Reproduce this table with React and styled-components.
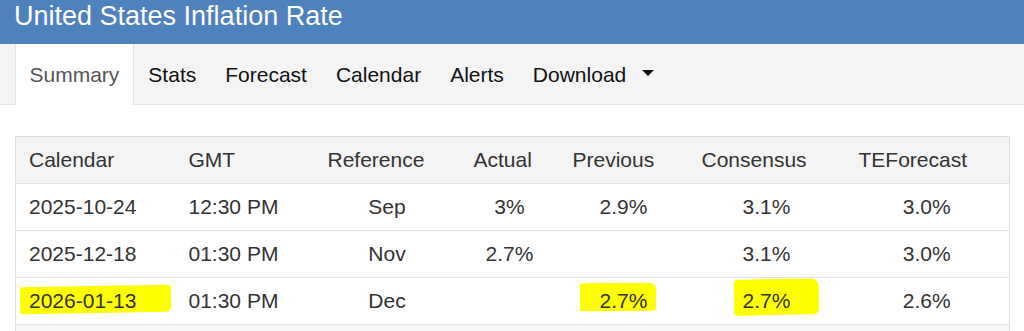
import styled, { createGlobalStyle } from "styled-components";

const Global = createGlobalStyle`
    body {
        margin: 0;
        background: #fff;
        font-family: "Liberation Sans", Arial, sans-serif;
    }
`

const Header = styled.header`
    height: 44px;
    background: #4f81bd;
    padding-left: 14px;
`

const Title = styled.h1`
    margin: 0;
    font-size: 27px;
    font-weight: normal;
    line-height: 33px;
    color: #fff;
`

const Nav = styled.nav`
    display: flex;
    height: 60px;
    padding-left: 15px;
    background: #f4f4f4;
    border-bottom: 1px solid #e6e6e6;
`

const Tab = styled.a`
    display: block;
    height: 61px;
    margin-bottom: -1px;
    padding: 1px 13.5px 0;
    box-sizing: border-box;
    line-height: 60px;
    font-size: 21px;
    color: ${p => p.$active ? '#555' : '#111'};
    background: ${p => p.$active ? '#fff' : 'transparent'};
    border-left: 1px solid ${p => p.$active ? '#e2e2e2' : 'transparent'};
    border-right: 1px solid ${p => p.$active ? '#e2e2e2' : 'transparent'};
    text-decoration: none;
`

const Caret = styled.span`
    display: inline-block;
    margin-left: 16px;
    margin-bottom: 7px;
    vertical-align: middle;
    border-left: 6px solid transparent;
    border-right: 6px solid transparent;
    border-top: 6px solid #111;
`

const Tabela = styled.table`
    margin: 31px 0 0 15px;
    width: 994px;
    table-layout: fixed;
    border-collapse: collapse;
    border: 1px solid #dcdcdc;
    color: #333;
    font-size: 21px;

    th {
        height: 46px;
        padding: 0 14px 0 13px;
        background: #f4f4f4;
        font-weight: normal;
        text-align: left;
        line-height: 46px;
    }
`

const Linha = styled.tr`
    background: ${p => p.$gray ? '#f6f6f6' : '#fff'};
`

const Cell = styled.td`
    height: 46px;
    padding: 0 14px 0 13px;
    border-top: 1px solid #e1e5e9;
    line-height: 46px;
    text-align: ${p => p.$center ? 'center' : 'left'};
    white-space: nowrap;
`

const Marker = styled.span`
    position: relative;
    z-index: 0;

    &::before {
        content: "";
        position: absolute;
        z-index: -1;
        left: ${p => -p.$l}px;
        right: ${p => -p.$r}px;
        top: ${p => -p.$t}px;
        bottom: ${p => -p.$b}px;
        background: #ffff00;
        border-radius: ${p => p.$radius};
        transform: rotate(${p => p.$rot}deg);
    }
`

const colunas = [
    ['Calendar', 160],
    ['GMT', 139],
    ['Reference', 146],
    ['Actual', 99],
    ['Previous', 129],
    ['Consensus', 157],
    ['TEForecast', 164],
]

const abas = ['Summary', 'Stats', 'Forecast', 'Calendar', 'Alerts']

// marcas amarelas feitas à mão na captura
const m1 = { $l: 9, $r: 35, $t: 3, $b: 1, $rot: -1, $radius: '2px 4px 5px 2px' }
const m2 = { $l: 20, $r: 8, $t: 6, $b: -1, $rot: -0.5, $radius: '3px 6px 4px 2px' }
const m3 = { $l: 9, $r: 28, $t: 10, $b: 3, $rot: -1, $radius: '4px 8px 6px 3px' }

const linhas = [
    ['2025-10-24', '12:30 PM', 'Sep', '3%', '2.9%', '3.1%', '3.0%'],
    ['2025-12-18', '01:30 PM', 'Nov', '2.7%', '', '3.1%', '3.0%'],
    [
        <Marker {...m1}>2026-01-13</Marker>, '01:30 PM', 'Dec', '',
        <Marker {...m2}>2.7%</Marker>, <Marker {...m3}>2.7%</Marker>, '2.6%'
    ],
]

export default function App() {
    return (
        <>
            <Global />
            <Header><Title>United States Inflation Rate</Title></Header>
            <Nav>
                {abas.map((aba, i) => <Tab key={aba} $active={i === 0}>{aba}</Tab>)}
                <Tab>Download<Caret /></Tab>
            </Nav>
            <Tabela>
                <colgroup>
                    {colunas.map(([nome, largura]) => <col key={nome} style={{ width: largura }} />)}
                </colgroup>
                <thead>
                    <tr>
                        {colunas.map(([nome]) => <th key={nome}>{nome}</th>)}
                    </tr>
                </thead>
                <tbody>
                    {linhas.map((linha, r) => (
                        <Linha key={r}>
                            {linha.map((valor, c) => <Cell key={c} $center={c > 1}>{valor}</Cell>)}
                        </Linha>
                    ))}
                    <Linha $gray>
                        {colunas.map(([nome]) => <Cell key={nome} />)}
                    </Linha>
                </tbody>
            </Tabela>
        </>
    )
}
